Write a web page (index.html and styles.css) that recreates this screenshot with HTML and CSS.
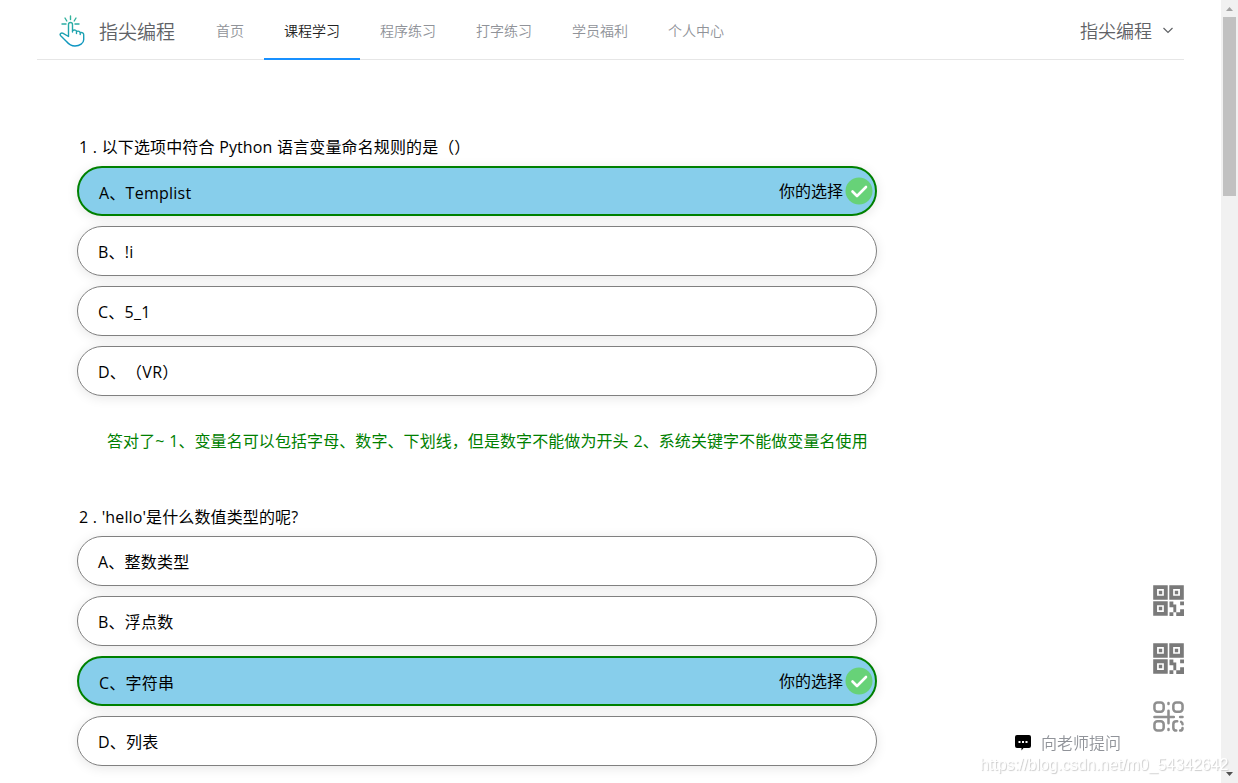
FILE: index.html
```html
<!DOCTYPE html>
<html lang="zh-CN">
<head>
    <meta charset="UTF-8">
    <meta name="viewport" content="width=device-width, initial-scale=1.0">
    <title>指尖编程</title>
    <link rel="stylesheet" href="styles.css">
</head>
<body>
    <div class="page">
        <div class="content">
            <header class="header">
                <div class="logo">
                    <svg class="logo-icon" width="26" height="32" viewBox="0 0 26 32" fill="none" stroke-width="1.4" stroke-linecap="round" stroke-linejoin="round">
                        <defs>
                            <linearGradient id="hand" x1="0" y1="0" x2="0" y2="32" gradientUnits="userSpaceOnUse">
                                <stop offset="0" stop-color="#35b597"/>
                                <stop offset="1" stop-color="#0a93c4"/>
                            </linearGradient>
                        </defs>
                        <g stroke="url(#hand)">
                            <path d="M11.500 1v3.500M6 3l1.800 3M17 3l-1.800 3M3 9h4M16 9h4"/>
                            <path d="M9.500 21V9.500a2 2 0 0 1 4 0V17M13.500 15.500c2-1 4-.500 4 1v2M17.500 16.500c2-.800 3.700 0 3.700 1.500v1.500M21.200 17.700c2-.500 3.500.300 3.500 2v5c0 3.500-4 6.300-8.700 6.300-4 0-6.500-2-8.500-4.500l-5.800-5.700c-1.500-1.700.500-3.500 2.500-2.500l5.300 3.200"/>
                        </g>
                    </svg>
                    <span class="logo-text">指尖编程</span>
                </div>
                <nav class="nav">
                    <a class="nav-item">首页</a>
                    <a class="nav-item active">课程学习</a>
                    <a class="nav-item">程序练习</a>
                    <a class="nav-item">打字练习</a>
                    <a class="nav-item">学员福利</a>
                    <a class="nav-item">个人中心</a>
                </nav>
                <div class="user">
                    <span>指尖编程</span>
                    <svg width="12" height="8" viewBox="0 0 12 8" fill="none" stroke="#606266" stroke-width="1.200"><path d="M1.500 2L6 6.500 10.500 2"/></svg>
                </div>
            </header>

            <main class="questions">
                <section class="question">
                    <div class="title">1 . 以下选项中符合 Python 语言变量命名规则的是（）</div>
                    <div class="options">
                        <div class="option selected">
                            <span>A、Templist</span>
                            <span class="choice">你的选择
                                <svg width="28" height="28" viewBox="0 0 28 28"><circle cx="14" cy="14" r="13.500" fill="#67d278"/><path d="M7.500 14.500l4.500 4.500 9-9" fill="none" stroke="#fff" stroke-width="2.600" stroke-linecap="round" stroke-linejoin="round"/></svg>
                            </span>
                        </div>
                        <div class="option"><span>B、!i</span></div>
                        <div class="option"><span>C、5_1</span></div>
                        <div class="option"><span>D、（VR）</span></div>
                    </div>
                    <p class="answer">答对了~ 1、变量名可以包括字母、数字、下划线，但是数字不能做为开头 2、系统关键字不能做变量名使用</p>
                </section>

                <section class="question">
                    <div class="title">2 . 'hello'是什么数值类型的呢?</div>
                    <div class="options">
                        <div class="option"><span>A、整数类型</span></div>
                        <div class="option"><span>B、浮点数</span></div>
                        <div class="option selected">
                            <span>C、字符串</span>
                            <span class="choice">你的选择
                                <svg width="28" height="28" viewBox="0 0 28 28"><circle cx="14" cy="14" r="13.500" fill="#67d278"/><path d="M7.500 14.500l4.500 4.500 9-9" fill="none" stroke="#fff" stroke-width="2.600" stroke-linecap="round" stroke-linejoin="round"/></svg>
                            </span>
                        </div>
                        <div class="option"><span>D、列表</span></div>
                    </div>
                </section>
            </main>
        </div>

        <div class="scrollbar">
            <svg width="17" height="17" viewBox="0 0 17 17"><path d="M5 11l3.500-4 3.500 4z" fill="#a3a3a3"/></svg>
            <div class="thumb"></div>
            <svg class="down" width="17" height="17" viewBox="0 0 17 17"><path d="M5 6h7l-3.500 4z" fill="#505050"/></svg>
        </div>
    </div>

    <!-- Floating QR codes -->
    <div class="side-codes">
        <svg width="31" height="31" viewBox="0 0 32 32">
            <g id="qr">
                <path d="M2.200 2.200h11v11h-11zM18.800 2.200h11v11h-11zM2.200 18.800h11v11h-11z" fill="none" stroke="#7a7a7a" stroke-width="4"/>
                <path d="M6 6h3.500v3.500H6zM22.500 6H26v3.500h-3.500zM6 22.500h3.500V26H6zM17 17h4v3h3v8h-3v-5h-4zM28 17h4v4h-4zM17 28h4v4h-4zM24 28h4v-3h4v7h-8z" fill="#7a7a7a"/>
            </g>
        </svg>
        <svg width="31" height="31" viewBox="0 0 32 32"><use href="#qr"/></svg>
        <svg width="31" height="31" viewBox="0 0 32 32" fill="none" stroke="#8f8f8f" stroke-width="2.600" stroke-linecap="round">
            <rect x="1.500" y="1.500" width="9.500" height="9.500" rx="3"/>
            <rect x="21" y="1.500" width="9.500" height="9.500" rx="3"/>
            <rect x="1.500" y="21" width="9.500" height="9.500" rx="3"/>
            <path d="M16 2v1M16 10v13M16 29v1M1.500 16.500h20M28 16.500h2.500M25 21h-1c-2 0-3 1-3 3v3.500c0 2 1 3 3 3M29 21.500c1 .500 1.500 1.300 1.500 2.500M30.500 28c0 1.500-1 2.500-2.500 2.500"/>
        </svg>
    </div>

    <div class="ask">
        <svg width="16" height="16" viewBox="0 0 16 16"><path d="M2 0h12q2 0 2 2v9q0 2-2 2H8.500L6.500 15.500V13H2q-2 0-2-2V2q0-2 2-2z" fill="#000"/><path d="M3.500 6h2v2h-2zM7 6h2v2H7zM10.500 6h2v2h-2z" fill="#fff"/></svg>
        <span>向老师提问</span>
    </div>
    <div class="watermark">https://blog.csdn.net/m0_54342642</div>
</body>
</html>
```
FILE: styles.css
```css
body {
    margin: 0;
    font-family: "Open Sans", "Noto Sans CJK SC", sans-serif;
    font-size: 16px;
    color: #000;
    background: #fff;
    overflow: hidden;
    text-spacing-trim: space-all;
}
.page {
    display: flex;
    height: 100vh;
    overflow: hidden;
}
.content {
    flex: 1;
    padding: 0 37px;
    overflow: hidden;
}
.header {
    display: flex;
    box-sizing: border-box;
    height: 60px;
    border-bottom: 1px solid #e6e6e6;
    font-family: "Noto Sans CJK SC", sans-serif;
    font-weight: 350;
}
.logo {
    display: flex;
    align-items: center;
    width: 137px;
    padding-left: 22px;
    color: #606266;
}
.logo-icon {
    margin-top: 3px;
}
.logo-text {
    margin-left: 14px;
    font-size: 19px;
    margin-top: 2px;
}
.nav {
    display: flex;
    height: 60px;
}
.nav-item {
    box-sizing: border-box;
    padding: 0 20px;
    font-size: 14px;
    line-height: 61px;
    height: 60px;
    color: #909399;
}
.nav-item.active {
    color: #222;
    border-bottom: 2px solid #1890ff;
}
.user {
    display: flex;
    align-items: center;
    gap: 10px;
    margin-left: auto;
    padding-right: 10px;
    font-size: 18px;
    color: #606266;
}
.questions {
    width: 800px;
    padding: 68px 0 0 40px;
}
.title {
    padding-left: 2px;
    line-height: 38px;
    font-size: 16px;
    letter-spacing: 0.12px;
    word-spacing: 0.3px;
}
.options {
    display: flex;
    flex-direction: column;
    gap: 10px;
}
.option {
    display: flex;
    align-items: center;
    justify-content: space-between;
    box-sizing: border-box;
    height: 50px;
    padding: 0 0 0 20px;
    border: 1px solid gray;
    border-radius: 25px;
    background: #fff;
    box-shadow: 0 2px 12px rgba(0, 0, 0, 0.1);
    letter-spacing: 0.25px;
}
.option.selected {
    padding-top: 1px;
    border: 2px solid green;
    background: skyblue;
}
.choice {
    display: flex;
    align-items: center;
    gap: 2px;
    line-height: 20px;
    margin: -1px 2px 0 0;
    letter-spacing: 0;
}
.answer {
    margin: 0;
    padding: 34px 0 46px 30px;
    line-height: 22px;
    letter-spacing: 0.08px;
    word-spacing: 0.5px;
    color: green;
    white-space: nowrap;
}
.scrollbar {
    display: flex;
    flex-direction: column;
    width: 17px;
    background: #f1f1f1;
}
.thumb {
    height: 179px;
    margin: 0 2px;
    background: #c1c1c1;
}
.down {
    margin-top: auto;
}
.side-codes {
    position: fixed;
    right: 54px;
    top: 585px;
    display: flex;
    flex-direction: column;
    gap: 27px;
}
.ask {
    position: fixed;
    left: 1015px;
    top: 732px;
    display: flex;
    align-items: center;
    gap: 10px;
    line-height: 22px;
    color: #909399;
    font-weight: 350;
}
.watermark {
    position: fixed;
    left: 980px;
    top: 755px;
    font-family: "Liberation Sans", Arial, sans-serif;
    font-size: 16px;
    line-height: 20px;
    letter-spacing: -0.05px;
    color: #fff;
    text-shadow: 1px 1px 1px #ccc;
}
```
